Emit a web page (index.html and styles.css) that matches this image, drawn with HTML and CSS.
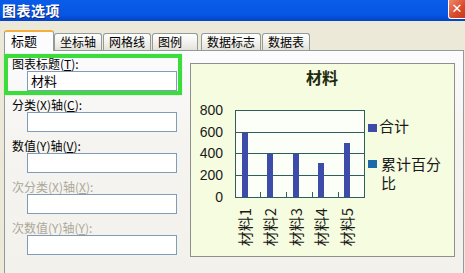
FILE: index.html
```html
<!DOCTYPE html>
<html lang="zh-CN">
<head>
    <meta charset="UTF-8">
    <meta name="viewport" content="width=device-width, initial-scale=1.0">
    <title>图表选项</title>
    <link rel="stylesheet" href="styles.css">
</head>
<body>

    <div class="titlebar">
        <span class="title">图表选项</span>
        <span class="close">&#x2715;</span>
    </div>

    <div class="dialog">
        <div class="tabs">
            <div class="tab active">标题</div>
            <div class="tab">坐标轴</div>
            <div class="tab">网格线</div>
            <div class="tab">图例</div>
            <div class="tab">数据标志</div>
            <div class="tab">数据表</div>
        </div>

        <div class="panel">
            <div class="fields">
                <div class="field">
                    <label>图表标题(<u>T</u>):</label>
                    <div class="input">材料</div>
                </div>
                <div class="field">
                    <label>分类(X)轴(<u>C</u>):</label>
                    <div class="input"></div>
                </div>
                <div class="field">
                    <label>数值(Y)轴(<u>V</u>):</label>
                    <div class="input"></div>
                </div>
                <div class="field disabled">
                    <label>次分类(X)轴(<u>X</u>):</label>
                    <div class="input"></div>
                </div>
                <div class="field disabled">
                    <label>次数值(Y)轴(<u>Y</u>):</label>
                    <div class="input"></div>
                </div>
            </div>

            <div class="preview">
                <svg class="chart" width="263" height="192" viewBox="0 0 263 192">
                    <text class="chart-title" x="131" y="20" text-anchor="middle">材料</text>

                    <!-- value axis -->
                    <g class="axis-labels" text-anchor="end">
                        <text x="32" y="51">800</text>
                        <text x="32" y="73">600</text>
                        <text x="32" y="94">400</text>
                        <text x="32" y="116">200</text>
                        <text x="32" y="138">0</text>
                    </g>

                    <!-- plot area -->
                    <rect class="plot" x="44.5" y="46.5" width="129" height="87"/>
                    <g class="grid">
                        <line x1="44" y1="68.5" x2="173" y2="68.5"/>
                        <line x1="44" y1="89.5" x2="173" y2="89.5"/>
                        <line x1="44" y1="111.5" x2="173" y2="111.5"/>
                        <line x1="69.5" y1="128" x2="69.5" y2="133"/>
                        <line x1="95.5" y1="128" x2="95.5" y2="133"/>
                        <line x1="121.5" y1="128" x2="121.5" y2="133"/>
                        <line x1="147.5" y1="128" x2="147.5" y2="133"/>
                    </g>
                    <g class="bars">
                        <rect x="51" y="69" width="6" height="64"/>
                        <rect x="76" y="90" width="6" height="43"/>
                        <rect x="102" y="90" width="6" height="43"/>
                        <rect x="127" y="99" width="6" height="34"/>
                        <rect x="153" y="79" width="6" height="54"/>
                    </g>

                    <!-- category labels -->
                    <g class="cat-labels" text-anchor="end">
                        <text transform="translate(60 144) rotate(-90)">材料1</text>
                        <text transform="translate(85 144) rotate(-90)">材料2</text>
                        <text transform="translate(111 144) rotate(-90)">材料3</text>
                        <text transform="translate(136 144) rotate(-90)">材料4</text>
                        <text transform="translate(162 144) rotate(-90)">材料5</text>
                    </g>

                    <!-- legend -->
                    <rect class="key-total" x="177" y="60" width="9" height="8"/>
                    <text class="legend" x="188" y="68">合计</text>
                    <rect class="key-percent" x="177" y="96" width="9" height="8"/>
                    <text class="legend"><tspan x="190" y="106">累计百分</tspan><tspan x="190" dy="19">比</tspan></text>
                </svg>
            </div>
        </div>
    </div>

    <div class="highlight"></div>

</body>
</html>
```

FILE: styles.css
```css
body {
    margin: 0;
    width: 465px;
    height: 273px;
    overflow: hidden;
    position: relative;
    background-color: #ece9d8;
    font-family: "Noto Sans CJK SC", "Liberation Sans", sans-serif;
    font-size: 12px;
    color: #000;
}
.titlebar {
    height: 21px;
    display: flex;
    justify-content: space-between;
    align-items: flex-start;
    background: linear-gradient(#0a5de8, #0656e3 70%, #0443c6);
}
.title {
    margin: 1px 0 0 2px;
    font-size: 14px;
    line-height: 18px;
    font-weight: bold;
    color: #fff;
    text-shadow: 1px 1px #0b2a8a;
    letter-spacing: 0.5px;
}
.close {
    width: 16px;
    height: 18px;
    border: 1px solid #fff;
    border-top: none;
    border-right: none;
    border-radius: 0 0 0 3px;
    background: linear-gradient(135deg, #ee8a6a, #d8492a 60%, #c23c1e);
    color: #fff;
    font-size: 13px;
    line-height: 18px;
    text-align: center;
    font-family: "DejaVu Sans", sans-serif;
}
.dialog {
    padding-top: 9px;
}
.tabs {
    display: flex;
    align-items: flex-end;
    gap: 1px;
    padding-left: 5px;
    position: relative;
    z-index: 1;
}
.tab {
    box-sizing: border-box;
    min-width: 46px;
    height: 17px;
    padding: 0 5px;
    border: 1px solid #919b9c;
    border-bottom: none;
    border-radius: 3px 3px 0 0;
    background: linear-gradient(#ffffff, #f0efea 60%, #e4e2d8);
    font-size: 12px;
    line-height: 16px;
    white-space: nowrap;
}
.tab:nth-child(5) {
    margin-left: 2px;
}
.tab.active {
    min-width: 50px;
    height: 21px;
    margin-left: -1px;
    margin-right: -1px;
    margin-bottom: -1px;
    padding-left: 6px;
    border-top: 2px solid #f5b03c;
    background: #fcfcfe;
    font-size: 13px;
    line-height: 17px;
}
.panel {
    box-sizing: border-box;
    margin-left: 4px;
    width: 460px;
    height: 225px;
    border: 1px solid #919b9c;
    background: linear-gradient(#fcfcfe, #f5f4f0 40%, #f2f1ec);
    display: flex;
}
.fields {
    width: 185px;
    padding: 5px 0 0 7px;
    box-sizing: border-box;
}
.field {
    margin-bottom: 6px;
}
.field label {
    display: block;
    height: 15px;
    line-height: 15px;
    white-space: nowrap;
}
.field.disabled label {
    color: #aca899;
}
.input {
    box-sizing: border-box;
    width: 150px;
    height: 20px;
    margin-left: 15px;
    border: 1px solid #7f9db9;
    background: #fff;
    padding-left: 3px;
    font-size: 13px;
    line-height: 18px;
}
.preview {
    margin-top: 12px;
    width: 265px;
    height: 194px;
    box-sizing: border-box;
    border: 1px solid #8e908c;
    background-color: #f6fcdf;
}
.chart {
    display: block;
    font-family: "Liberation Sans", "Noto Sans CJK SC", sans-serif;
}
.chart-title {
    font-family: "Noto Sans CJK SC", sans-serif;
    font-size: 16px;
    font-weight: bold;
    fill: #1c2a10;
}
.axis-labels text {
    font-size: 14px;
    fill: #1a1a1a;
}
.plot {
    fill: #fbfff8;
    stroke: #2f5e5e;
    stroke-width: 1;
}
.grid line {
    stroke: #2f5e5e;
    stroke-width: 1;
}
.bars rect {
    fill: #3d4ca8;
}
.cat-labels text {
    font-family: "Noto Sans CJK SC", "Liberation Sans", sans-serif;
    font-size: 15px;
    fill: #1a1a1a;
}
.legend {
    font-family: "Noto Sans CJK SC", sans-serif;
    font-size: 15px;
    fill: #1a1a1a;
}
.key-total {
    fill: #3d4ca8;
}
.key-percent {
    fill: #1e6aa8;
}
.highlight {
    position: absolute;
    left: 4px;
    top: 54px;
    width: 178px;
    height: 41px;
    box-sizing: border-box;
    border: 4px solid #3cdc3c;
    box-shadow: 0 0 1px #8cf08c;
}
```
